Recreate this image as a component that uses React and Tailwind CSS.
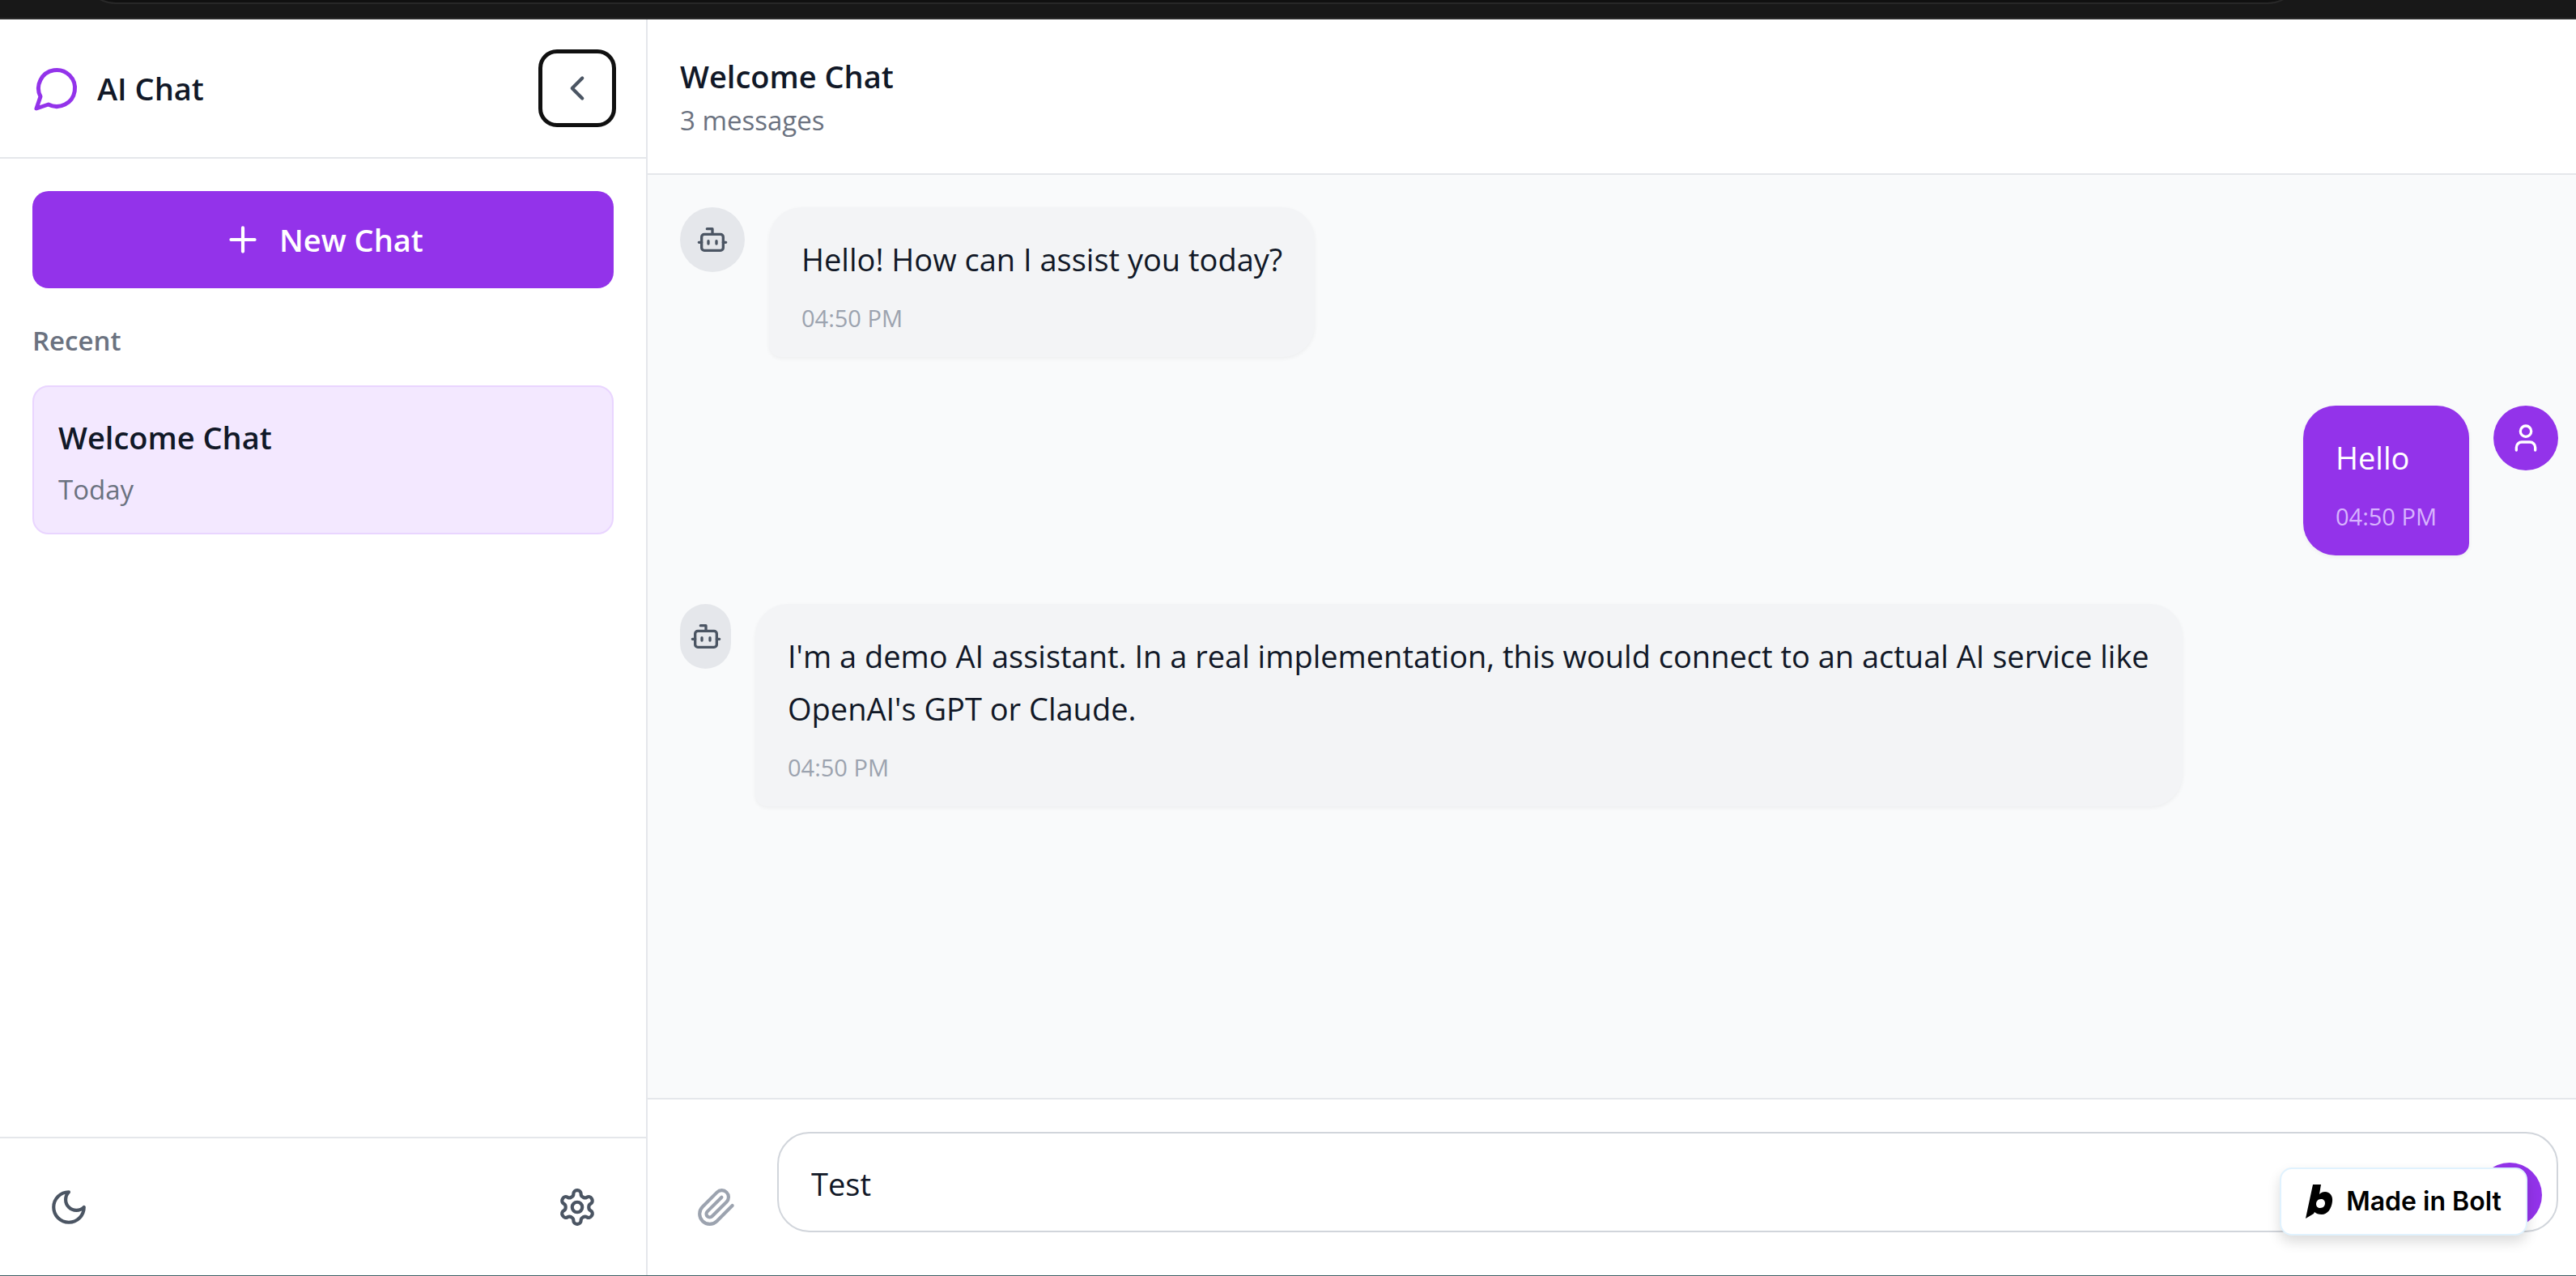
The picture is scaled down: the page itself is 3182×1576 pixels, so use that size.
import React from "react";

function Icon({ className, children }) {
  return (
    <svg viewBox="0 0 24 24" fill="none" stroke="currentColor" strokeWidth="2" strokeLinecap="round" strokeLinejoin="round" className={className} aria-hidden="true">
      {children}
    </svg>
  );
}

function BotIcon() {
  return (
    <Icon className="size-10 shrink-0">
      <path d="M12 8V4H8" />
      <rect width="16" height="12" x="4" y="8" rx="2" />
      <path d="M2 14h2M20 14h2M15 13v2M9 13v2" />
    </Icon>
  );
}

function BrowserEdge() {
  return (
    <div className="h-6 shrink-0 overflow-hidden border-b-2 border-[#2b2b2b] bg-[#181818] pl-[101px] pr-[339px]">
      <div className="-mt-[79px] h-[84px] rounded-[42px] border-2 border-[#282828] bg-[#101010]" />
    </div>
  );
}

function Sidebar() {
  return (
    <aside className="flex w-[800px] shrink-0 flex-col border-r-2 border-gray-200 bg-white">
      <header className="flex items-center justify-between border-b-2 border-gray-200 p-10">
        <div className="flex items-center gap-5">
          <Icon className="size-[60px] text-[#9333ea]">
            <path d="M7.9 20A9 9 0 1 0 4 16.1L2 22Z" />
          </Icon>
          <h1 className="text-[38px] leading-[60px] font-semibold">AI Chat</h1>
        </div>
        <button aria-label="Collapse sidebar" className="rounded-[20px] p-5 text-[#4b5563] outline-[5px] -outline-offset-2 outline-[#101010]">
          <Icon className="size-[50px]">
            <path d="m15 18-6-6 6-6" />
          </Icon>
        </button>
      </header>
      <div className="flex-1 p-10">
        <button className="flex w-full items-center justify-center gap-5 rounded-[20px] bg-[#9333ea] py-[30px] text-[38px] leading-[60px] font-semibold text-white">
          <Icon className="size-[50px]">
            <path d="M5 12h14M12 5v14" />
          </Icon>
          New Chat
        </button>
        <h2 className="mt-10 text-[33px] leading-[50px] font-semibold text-[#6b7280]">Recent</h2>
        <button className="mt-[30px] block w-full rounded-[20px] border-2 border-[#e9d5ff] bg-[#f3e8ff] px-[30px] pt-8 pb-7 text-left">
          <span className="block text-[38px] leading-[60px] font-semibold">Welcome Chat</span>
          <span className="mt-[10px] block text-[33px] leading-[50px] text-[#6b7280]">Today</span>
        </button>
      </div>
      <footer className="flex items-center justify-between border-t-2 border-gray-200 px-10 pt-10 pb-[39px] text-[#4b5563]">
        <button aria-label="Dark mode" className="p-5">
          <Icon className="size-[50px]">
            <path d="M12 3a6 6 0 0 0 9 9 9 9 0 1 1-9-9Z" />
          </Icon>
        </button>
        <button aria-label="Settings" className="p-5">
          <Icon className="size-[50px]">
            <path d="M12.22 2h-.44a2 2 0 0 0-2 2v.18a2 2 0 0 1-1 1.73l-.43.25a2 2 0 0 1-2 0l-.15-.08a2 2 0 0 0-2.73.73l-.22.38a2 2 0 0 0 .73 2.73l.15.1a2 2 0 0 1 1 1.72v.51a2 2 0 0 1-1 1.74l-.15.09a2 2 0 0 0-.73 2.73l.22.38a2 2 0 0 0 2.73.73l.15-.08a2 2 0 0 1 2 0l.43.25a2 2 0 0 1 1 1.73V20a2 2 0 0 0 2 2h.44a2 2 0 0 0 2-2v-.18a2 2 0 0 1 1-1.73l.43-.25a2 2 0 0 1 2 0l.15.08a2 2 0 0 0 2.73-.73l.22-.39a2 2 0 0 0-.73-2.73l-.15-.08a2 2 0 0 1-1-1.74v-.5a2 2 0 0 1 1-1.74l.15-.09a2 2 0 0 0 .73-2.73l-.22-.38a2 2 0 0 0-2.73-.73l-.15.08a2 2 0 0 1-2 0l-.43-.25a2 2 0 0 1-1-1.73V4a2 2 0 0 0-2-2z" />
            <circle cx="12" cy="12" r="3" />
          </Icon>
        </button>
      </footer>
    </aside>
  );
}

function BotMessage({ narrow, children }) {
  return (
    <div className="flex max-w-[80%] items-start gap-[30px]">
      <div className={narrow ? "flex h-20 w-[63px] shrink-0 items-center justify-center rounded-full bg-[#e5e7eb] text-[#4b5563]" : "flex size-20 shrink-0 items-center justify-center rounded-full bg-[#e5e7eb] text-[#4b5563]"}>
        <BotIcon />
      </div>
      <div className="rounded-[40px] rounded-bl-[15px] bg-[#f3f4f6] px-10 pt-8 pb-7 shadow-[0_2px_5px_rgba(0,0,0,0.05)]">
        <p className="text-[38px] leading-[65px]">{children}</p>
        <p className="mt-5 text-[29px] leading-10 text-[#9ca3af]">04:50 PM</p>
      </div>
    </div>
  );
}

function UserMessage({ children }) {
  return (
    <div className="flex max-w-[80%] items-start gap-[30px] self-end">
      <div className="rounded-[40px] rounded-br-[15px] bg-[#9333ea] px-10 pt-8 pb-7 text-white shadow-[0_2px_5px_rgba(0,0,0,0.05)]">
        <p className="text-[38px] leading-[65px]">{children}</p>
        <p className="mt-5 text-[29px] leading-10 text-[#d8b4fe]">04:50 PM</p>
      </div>
      <div className="flex size-20 shrink-0 items-center justify-center rounded-full bg-[#9333ea] text-white">
        <Icon className="size-10">
          <path d="M19 21v-2a4 4 0 0 0-4-4H9a4 4 0 0 0-4 4v2" />
          <circle cx="12" cy="7" r="4" />
        </Icon>
      </div>
    </div>
  );
}

function Composer() {
  return (
    <footer className="relative flex items-end gap-[30px] border-t-2 border-gray-200 bg-white pt-10 pr-[22px] pb-[39px] pl-10">
      <button aria-label="Attach file" className="p-5 text-[#9ca3af]">
        <Icon className="size-[50px]">
          <path d="m21.44 11.05-9.19 9.19a6 6 0 0 1-8.49-8.49l8.57-8.57A4 4 0 1 1 18 8.84l-8.59 8.57a2 2 0 0 1-2.83-2.83l8.49-8.48" />
        </Icon>
      </button>
      <div className="relative mb-[14px] flex-1">
        <input aria-label="Message" defaultValue="Test" className="block h-[124px] w-full rounded-[40px] border-2 border-[#d1d5db] bg-white pt-1 pr-[120px] pl-10 text-[38px] outline-none" />
        <button aria-label="Send" className="absolute right-5 bottom-[6px] size-20 rounded-full bg-[#9333ea]" />
      </div>
      <a href="#bolt" className="absolute right-[60px] bottom-[49px] flex h-[84px] w-[306px] items-center justify-center gap-4 rounded-[15px] border-2 border-[#e0f2fe] bg-white font-['Inter',sans-serif] text-[32px] font-semibold text-black shadow-[0_8px_16px_rgba(0,0,0,0.14)]">
        <svg viewBox="0 0 34 42" className="h-[42px] w-[34px] shrink-0" aria-hidden="true">
          <path fillRule="evenodd" d="M9 0H19L17 12C19 10 21 9 24 9C30 9 34 14 33 21C32 30 27 37 20 37C16 37 13 36 11 34L10 36L0 42ZM19 18C15 18 13 21 13 24C13 27 15 29 18 29C22 29 24 26 24 23C24 20 22 18 19 18Z" />
        </svg>
        Made in Bolt
      </a>
    </footer>
  );
}

export default function App() {
  return (
    <div className="flex h-screen flex-col border-b border-[#3f6065] bg-white font-['Open_Sans',sans-serif] text-[#111827]">
      <BrowserEdge />
      <div className="flex min-h-0 flex-1">
        <Sidebar />
        <main className="flex min-w-0 flex-1 flex-col bg-[#f9fafb]">
          <header className="border-b-2 border-gray-200 bg-white p-10">
            <h2 className="text-[38px] leading-[60px] font-semibold">Welcome Chat</h2>
            <p className="text-[33px] leading-[50px] text-[#6b7280]">3 messages</p>
          </header>
          <section className="flex min-h-0 flex-1 flex-col items-start gap-[60px] pt-10 pr-[22px] pl-10">
            <BotMessage>Hello! How can I assist you today?</BotMessage>
            <UserMessage>Hello</UserMessage>
            <BotMessage narrow>
              I'm a demo AI assistant. In a real implementation, this would connect to an actual AI service like OpenAI's GPT or Claude.
            </BotMessage>
          </section>
          <Composer />
        </main>
      </div>
    </div>
  );
}
